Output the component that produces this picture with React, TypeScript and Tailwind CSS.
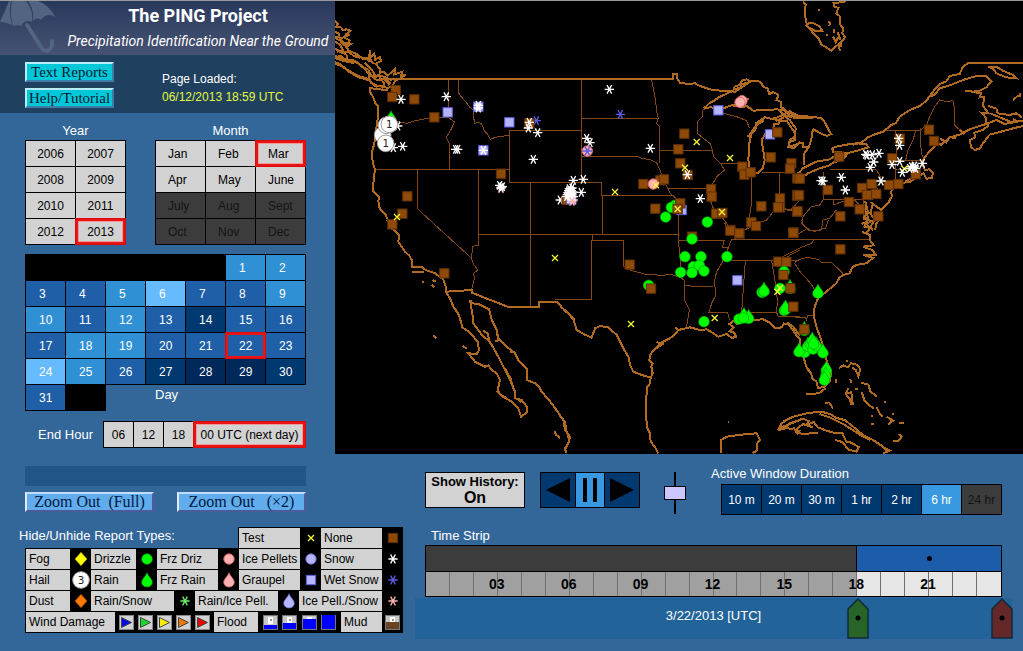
import { useState } from "react";
import clsx from "clsx";

type Kind =
  | "none"
  | "test"
  | "snow"
  | "wetsnow"
  | "rainsnow"
  | "icesnow"
  | "drizzle"
  | "rain"
  | "frzdriz"
  | "frzrain"
  | "pellets"
  | "graupel"
  | "rainice"
  | "fog"
  | "dust"
  | "hail"
  | "hail1"
  | "hail3";

type Marker = [Kind, number, number];

const STAR = "M-14 0H14M-7 -13L7 13M7 -13L-7 13";
const DROP = "M0 -22C3 -11 16 -4 16 7A16 14 0 0 1 -16 7C-16 -4 -3 -11 0 -22Z";

// Symbols are drawn on a grid of three units per screen pixel
function Symbol({ kind }: { kind: Kind }) {
  switch (kind) {
    case "none":
      return <rect x="-14" y="-14" width="28" height="28" fill="#8f4a08" stroke="#5c2f06" strokeWidth="3" />;
    case "test":
      return <path d="M-9 -9L9 9M9 -9L-9 9" stroke="#f4f43c" strokeWidth="4" />;
    case "snow":
      return <path d={STAR} stroke="#ffffff" strokeWidth="4" />;
    case "wetsnow":
      return <path d={STAR} stroke="#5a5ae6" strokeWidth="4" />;
    case "rainsnow":
      return <path d={STAR} stroke="#6cf06c" strokeWidth="4" />;
    case "icesnow":
      return <path d={STAR} stroke="#ffb4b4" strokeWidth="4" />;
    case "drizzle":
      return <circle r="16" fill="#00ff00" stroke="#0a9a0a" strokeWidth="2" />;
    case "rain":
      return <path d={DROP} fill="#00ff00" stroke="#0a9a0a" strokeWidth="2" />;
    case "frzdriz":
      return <circle r="15.5" fill="#ffb0b0" stroke="#d86868" strokeWidth="3" />;
    case "frzrain":
      return <path d={DROP} fill="#ffb0b0" stroke="#d86868" strokeWidth="2" />;
    case "pellets":
      return <circle r="15.5" fill="#b4b4ff" stroke="#6c6cd8" strokeWidth="3" />;
    case "rainice":
      return <path d={DROP} fill="#b4b4ff" stroke="#6c6cd8" strokeWidth="2" />;
    case "graupel":
      return <rect x="-14" y="-14" width="28" height="28" fill="#b4b4ff" stroke="#5c5ce0" strokeWidth="3" />;
    case "fog":
      return <path d="M0 -20L18 0L0 20L-18 0Z" fill="#ffff00" stroke="#a8a800" strokeWidth="2" />;
    case "dust":
      return <path d="M0 -20L18 0L0 20L-18 0Z" fill="#ff7800" stroke="#a04800" strokeWidth="2" />;
    default:
      return (
        <>
          <circle r="25" fill="#ffffff" stroke="#9a9a9a" strokeWidth="3" />
          {kind !== "hail" && (
            <text y="11" textAnchor="middle" fontSize="31" fill="#222222" className="font-['DejaVu_Sans',sans-serif]">
              {kind === "hail1" ? "1" : "3"}
            </text>
          )}
        </>
      );
  }
}

function Icon({ kind }: { kind: Kind }) {
  return (
    <svg viewBox="-30 -30 60 60" className="size-5 shrink-0" aria-hidden="true">
      <Symbol kind={kind} />
    </svg>
  );
}

interface Region {
  shift: string;
  coast: string;
  states: string;
  markers: Marker[];
}

const regions: Region[] = [
  {
    // Pacific Northwest
    shift: "translate(0 0)",
    coast:
      "M0 62l8 10-6 10 14-2 8 10 10-2 12 4-14 12-4 8 16 10-4 12-14 2-10-14-16-8M0 95l12 6 2 14 14 14 20 2-14 10 8 12 22 8 16 12 20 2 6-24-2 26 14-16 2 18 14-8 4 12-16 8 12 16 0 12 12-4 12 12 22-20-2 16 24-8-4 12 14-2-20 12-26 2-16-8-20-6-10 10-12-8-8-18-20-8-14-14-16-8-18 2-14-14-14 4M0 110l20 4 24-10M0 125l16 10 8 16-18 4M8 150l26 14 4 14M0 146l20 12 20-4 16 14 20 6M0 168l28 8 30 8 24 14 18 22 4 18-34-10-32-18-24-18-14-6M0 174l24 8 34 8M0 192l20 6 26 20 26 14 28 8 26 22M60 160l24 16 22 2 10 14M80 172l30 12M90 188l20 20 10 18M104 226l28 2 8 12-22-2M106 248l18 8 36 8 14-8 6-14 14-6M138 236l10 16-8 12M150 240l14 16M156 236l10 16M104 260V274L114 290L120 308L128 316L130 345L126 370L122 400L118 430L110 460L114 490L120 508L116 540L114 572L132 590L130 604L134 625L152 645L165 672L172 690M104 264L130 268L160 270M140 237H720",
    states:
      "M190 365L215 370L240 362L285 354L315 352H342M340 240V352L358 366L350 385L334 412L342 430V508M122 508H523M370 240V278L380 292L392 305L405 322L415 330L418 372L430 366L440 372L448 392L458 402L466 418L480 412L522 406M523 548V392H675M523 548H800M586 548V920M247 508V626L410 775M430 508V738M430 703H1030",
    markers: [
      ["none", 182, 270], ["none", 172, 291], ["none", 238, 298], ["none", 298, 352],
      ["none", 217, 589], ["none", 202, 641], ["none", 172, 673], ["test", 186, 651],
      ["none", 498, 521], ["snow", 198, 298], ["snow", 334, 290], ["graupel", 338, 337],
      ["graupel", 430, 320], ["snow", 430, 316], ["snow", 430, 324], ["graupel", 523, 367],
      ["graupel", 445, 451], ["snow", 445, 451], ["wetsnow", 604, 362], ["none", 583, 370],
      ["snow", 583, 367], ["snow", 580, 384], ["snow", 608, 398], ["snow", 595, 478],
      ["snow", 362, 448], ["snow", 368, 448], ["snow", 203, 439], ["snow", 175, 443],
      ["snow", 188, 378], ["rain", 168, 354], ["hail", 143, 405], ["hail", 154, 376],
      ["hail1", 163, 373], ["hail1", 152, 430], ["icesnow", 498, 566], ["snow", 494, 556],
      ["snow", 502, 560], ["snow", 498, 562],
    ],
  },
  {
    // Southwest and Baja California
    shift: "translate(0 660)",
    coast:
      "M155 0L178 30L192 45L190 65L210 95L222 106L230 120L232 140L262 142L272 150L300 160L325 178L332 200L332 215L345 235L355 260L362 270L372 285L382 322L405 338L428 365L432 390L425 402L400 400L420 425L450 440L460 436L470 450L485 460L495 480L487 515L508 532L530 545L550 565L558 590L575 578L575 560L560 540L540 535L540 515L530 490L510 450L490 410L470 375L460 360L445 350L430 330L415 310L412 280L405 240L412 250L430 252L462 268L470 300L485 330L490 355L515 380L540 400L550 420L575 445L575 480L600 490L612 500L620 515L650 550L685 600L690 630L705 650L700 670L690 685L695 700M335 215L410 210V218L518 260H612V245H665L690 272L720 300M445 332l14 10 4 22-12-10M485 340l6 20-10 4M505 440l14 24 10 26 8 20M512 450l14 24 8 26M548 535l10 12M488 512l14 18 12 2M232 157h34M260 187h8M292 180l10 5M290 195l8 8M295 345l8 10M382 378l15 8M525 396h16M658 632l5 12 12 10",
    states: "M410 210L418 175L416 160L428 150L414 130L410 118L412 80L420 76L430 78M660 238H720",
    markers: [["none", 328, 160], ["test", 660, 114]],
  },
  {
    // Northern plains and Great Lakes
    shift: "translate(675 0)",
    coast:
      "M0 237H340V222L350 222L352 236L360 248L385 252L405 250L420 258L450 268L480 272L510 272L525 276L545 262L575 242L600 245L612 262L622 264L628 282L640 276L655 285L650 300L664 306L662 322L690 340L720 348M432 325L450 308L462 302L480 290L520 272L524 260L540 254L546 242L560 238L570 244M520 268l20-4 6-12 14-4M432 325L450 322L490 325L520 314L545 322L560 318L580 332L620 330L650 328L675 332M560 410l12-6 14-14 2-14 12-12M572 400l22-28 18-10M566 410l10-16M600 362L585 380L575 395L568 430L565 480L570 510L578 523L595 518L608 505L614 480L608 440L605 420L622 392M585 372L615 352L640 358L665 346L690 350L720 348M654 328L670 344L690 334L720 352M640 385L642 372L655 372L658 362L680 362L695 385L705 400L705 420L690 425L685 440L700 445L720 425M640 350l10 12 22-10M520 320l22-10 12-12 12 0",
    states:
      "M0 392H62M64 240V548M64 355H295M64 469H235L245 476L270 478L290 488L300 510L306 530L320 560L330 580L345 592L355 606V703M275 240L280 265L286 295L290 335L295 355L290 370L298 380V490M298 451H458M125 548V586H340M127 586V703M320 566L390 564L438 564L448 555M440 325L428 330L428 350L412 365L412 400L430 415L450 430L458 451L460 470L480 488L494 510L470 530L462 545L448 560L450 580L452 605L462 630L485 650L500 670L508 690M480 490H545M490 340L530 350L560 362L568 385M575 530V610L570 640L560 690M605 517H705M658 519V600M500 694L530 690L560 688L590 670L620 660L640 635L660 625L690 632L720 600",
    markers: [
      ["none", 373, 401], ["none", 355, 448], ["none", 361, 490], ["none", 383, 525],
      ["none", 250, 552], ["none", 301, 541], ["none", 312, 538], ["none", 286, 626],
      ["none", 453, 567], ["none", 455, 590], ["none", 468, 641], ["none", 487, 639],
      ["none", 547, 500], ["none", 553, 524], ["none", 572, 517], ["none", 632, 472],
      ["graupel", 630, 403], ["none", 652, 397], ["none", 660, 595], ["none", 660, 622],
      ["none", 654, 622], ["none", 604, 619], ["none", 574, 667], ["none", 588, 678],
      ["none", 700, 698], ["none", 511, 690], ["none", 538, 700],
      ["none", 712, 535], ["none", 712, 585], ["none", 712, 635],
      ["graupel", 475, 331], ["frzdriz", 546, 302], ["frzdriz", 540, 307], ["snow", 148, 268],
      ["wetsnow", 181, 343], ["snow", 80, 415], ["snow", 90, 428], ["frzdriz", 82, 453],
      ["wetsnow", 82, 453], ["snow", 271, 445], ["snow", 40, 541], ["snow", 70, 538],
      ["snow", 64, 577], ["snow", 1, 600], ["snow", 382, 524], ["snow", 421, 596],
      ["none", 20, 600], ["graupel", 34, 598], ["icesnow", 40, 600], ["snow", 28, 566],
      ["snow", 34, 572], ["snow", 24, 578], ["snow", 36, 582], ["snow", 28, 588],
      ["snow", 20, 590], ["snow", 40, 590], ["snow", 30, 596], ["snow", 26, 572],
      ["snow", 31, 580], ["snow", 36, 564], ["snow", 22, 584], ["snow", 33, 592],
      ["snow", 38, 576], ["icesnow", 36, 604],
      ["test", 410, 426], ["test", 510, 474], ["test", 375, 503], ["test", 165, 576],
      ["frzdriz", 280, 552], ["test", 288, 556], ["graupel", 365, 630], ["drizzle", 345, 616],
      ["none", 361, 610], ["drizzle", 334, 622], ["none", 353, 627], ["test", 353, 627],
      ["drizzle", 317, 651], ["drizzle", 442, 666], ["test", 486, 636],
    ],
  },
  {
    // Northeast and eastern Canada
    shift: "translate(1344 0)",
    coast:
      "M60 4L68 14L66 30L68 60L74 80L84 90L90 100L106 114L116 134L130 142L145 152L155 142L168 132L170 152M175 142V126L186 112L178 100L180 84L170 72L172 50L160 40L166 24L154 20L152 10L190 4M68 78L78 70L92 70L108 78L118 92L95 92L80 84M154 88v12M150 110l8 16 8-14M164 96l8 24M104 30h6M134 64l8 6-4 8M128 104h6M0 322L10 338L20 348H60L100 352L118 356L130 375L138 392L145 402L132 408L112 400L92 388L88 396L85 420L78 440L64 460L62 495M30 354h60M0 345L20 360L38 385L35 410L20 420L16 440L32 436L50 430L60 428V442L78 440M42 525L60 505L100 485L140 478L165 462L190 466L180 478L150 488L140 496L110 505L75 520L60 530L42 518M148 445L160 440L190 434L220 430L250 432L256 442L230 450L200 458L150 457ZM210 434L235 428L255 412L270 405L300 395L325 375L338 370L350 350L380 330L410 318L428 304L440 290L455 284L470 265L500 256L540 240L580 228L610 228L625 245L610 262L590 272L570 275L545 272M428 304L455 268L470 252L490 244L500 228L530 222L540 200L556 188H600L660 190L720 190M615 200L640 200L660 212L690 225L700 235L670 232L640 220L632 208ZM560 274L595 280L590 292L604 290L600 318L616 340L596 338L608 352L610 372L590 378L560 388L530 404L500 412L474 434L462 430L455 440L435 460L422 475L418 495L426 510L440 508L450 520L446 534L430 536L422 520L400 532L382 545L350 550L330 556L325 574L326 590L315 610L295 630L275 616L262 606M616 318L640 326L644 340L680 345L700 340L716 352M622 340L650 352L684 366L702 364L690 358M690 300l14-12 8 0 0-8M610 372L640 360L664 372L720 362M720 378L690 385L650 396L620 404L600 430L590 446L575 450L563 440L562 420L576 412L574 398L600 390L618 375M470 415l20 12 10-16 20 4M530 390l14 14M365 545l16-8 24-10M246 602L256 640L244 650L262 665L250 672L270 690M250 605L246 630L258 660M270 610L262 640L276 660L262 680M276 640L292 650L280 672L276 690M240 655l30 10",
    states:
      "M310 390H412L430 378L440 350L455 320L470 300L490 305L510 302L515 330V375L525 385L540 395M338 392L342 430L338 480V540M398 392L390 420L375 450L368 480M412 385V430L418 470M338 480H415M335 508H395M122 515V598H270M140 508H278L290 525L295 545L280 560L290 585M150 600V615L180 604L215 600L240 625M122 598L110 615L85 620L60 650L56 670L80 690M160 630L140 655L120 660L115 690L90 692M0 625L20 630L45 640M240 598V650",
    markers: [
      ["none", 25, 490], ["none", 21, 506], ["none", 50, 536], ["none", 43, 587],
      ["none", 48, 586], ["none", 43, 634], ["none", 168, 470], ["none", 134, 570],
      ["none", 438, 389], ["none", 453, 423], ["none", 350, 416], ["none", 328, 475],
      ["none", 398, 523], ["none", 346, 552], ["none", 318, 555], ["none", 237, 564],
      ["none", 252, 585], ["none", 266, 552], ["none", 280, 582], ["none", 198, 606],
      ["none", 230, 628], ["none", 172, 649], ["none", 286, 649], ["snow", 347, 415],
      ["snow", 350, 436], ["snow", 248, 463], ["snow", 252, 466], ["snow", 268, 464],
      ["snow", 288, 460], ["snow", 272, 486], ["snow", 262, 502], ["snow", 350, 484],
      ["snow", 327, 494], ["snow", 418, 490], ["snow", 380, 505], ["snow", 386, 500],
      ["snow", 392, 503], ["snow", 398, 505], ["snow", 394, 498], ["test", 364, 506],
      ["snow", 358, 517], ["snow", 114, 542], ["snow", 120, 543], ["snow", 175, 532],
      ["snow", 187, 570], ["snow", 294, 543],
    ],
  },
  {
    // Texas, the Gulf and the Deep South
    shift: "translate(675 660)",
    coast:
      "M0 258L20 275L40 298L50 330L75 344L95 353L105 325L120 318L145 322L170 345L190 385L205 410L212 440L220 455L245 465L272 473L278 460L274 440L278 430L268 420L270 405L280 392L300 370L330 355L348 340L355 330L390 322L420 330L440 328L460 340L475 350L500 342L516 354L528 350L522 338L508 334L520 322L508 312L522 302L530 312L536 300L570 300L610 298L630 308L645 325L665 322L672 312L685 310L700 320L720 347M272 473L270 490L262 500L258 540L260 620L270 640L272 665L285 682L295 700M290 366l18 6-20 14M345 322l14 10M483 700V660L500 650L560 642L590 640L600 660L590 672L592 690L578 700M655 630L665 610L680 600L700 590L720 585M655 630L680 624L700 628M664 622L690 612L720 600M700 622L712 640L720 630M0 588L15 605L20 635L28 660L15 690L20 700M504 606h4",
    states:
      "M97 43V61M95 61H190V138L215 152L240 158L260 165L280 162L300 168L330 162L355 170L373 180V240L388 270L380 320M95 61V238H0M355 43V61L360 110V175M355 61H493L487 82H505L515 58H720M375 197L430 200L460 199M505 82L497 110L485 130L470 155L463 185L467 215L465 230L455 250L447 276H503L508 300M485 122H718M556 122L545 275L552 295M635 122L648 200L652 240L650 278M560 278H650L655 290H720M493 8L510 30L538 50L515 60M670 122L690 105L720 90",
    markers: [
      ["none", 511, 32], ["none", 538, 40], ["none", 700, 38], ["none", 396, 50],
      ["drizzle", 396, 57], ["none", 209, 134], ["drizzle", 266, 196], ["none", 273, 206],
      ["drizzle", 375, 110], ["drizzle", 423, 110], ["drizzle", 400, 140], ["drizzle", 418, 136],
      ["drizzle", 362, 157], ["drizzle", 432, 153], ["drizzle", 396, 158], ["drizzle", 501, 110],
      ["graupel", 532, 181], ["drizzle", 432, 305], ["test", 213, 312], ["test", 464, 294],
      ["drizzle", 606, 217], ["drizzle", 611, 214], ["rain", 612, 208], ["rain", 552, 284],
      ["drizzle", 537, 297], ["rain", 566, 290], ["drizzle", 550, 294], ["none", 655, 125],
      ["none", 679, 126], ["drizzle", 672, 155], ["none", 670, 165], ["rain", 690, 200],
      ["none", 691, 205], ["drizzle", 660, 205], ["test", 660, 204], ["test", 652, 215],
      ["rain", 673, 266], ["rain", 677, 262], ["none", 700, 260],
    ],
  },
  {
    // Carolinas, Florida, Cuba and the Bahamas
    shift: "translate(1344 660)",
    coast:
      "M235 12L250 6L244 20L262 24L250 40L238 36L262 46V62L272 76L240 80L268 90L278 105L240 104L270 114L250 130L220 135L208 142L200 160L180 165L170 172L160 190L130 215L105 235L95 260L92 285L100 320L115 360L125 400L132 425L145 455L140 485L125 500L105 505L100 485L88 475L84 460L70 440L64 420L52 385L50 355L40 345L30 330L15 312L0 310M70 440l8 14M70 523h20L110 518L128 505M0 605L30 590L80 578L120 576L145 584L160 594L185 600L208 618L240 645L270 660L300 680L315 695M110 582L140 592L180 612L206 628L236 648L262 660M0 630L20 610L60 596L78 604L68 616L92 606L104 622L130 632L160 640L178 640L190 665L205 668L228 682L220 695L195 688L178 666L155 660M36 635L60 642L106 638M46 640L40 628L60 612L90 622M300 682L320 692L300 700M168 444L182 436L194 442L204 430L222 434L232 448L226 468L218 450L206 442M190 424h6M158 478v10M202 478l2 12M216 506h8M196 504L188 522L200 536L206 556M204 512L210 556M186 518h16M234 488L256 494L262 514L282 530M236 516L244 540L262 558L272 566M280 560L290 580L298 590M306 544v6M268 584v6M264 612h8M312 590L328 602L316 614M322 596L334 604M348 610h14M328 582h4M330 662L346 664L356 650L346 642M138 546L150 566M126 550h8",
    states:
      "M0 58H265M35 128L50 118L75 112L105 118L115 127H145L180 160M35 130L55 160L70 175L90 200L100 225M0 290L68 292L70 300L75 285L92 285M0 110L30 95L60 80L85 70L92 60M56 0L60 15L76 30L95 34L128 24L136 0M70 28L30 50",
    markers: [
      ["none", 31, 38], ["none", 172, 88], ["rain", 105, 214], ["rain", 64, 326],
      ["none", 64, 328], ["rain", 65, 392], ["rain", 48, 390], ["rain", 74, 374],
      ["rain", 82, 366], ["rain", 90, 382], ["rain", 100, 372], ["rain", 88, 358],
      ["rain", 92, 366], ["rain", 120, 393], ["rain", 130, 445], ["rain", 128, 462],
      ["rain", 124, 475],
    ],
  },
];

function ReportMap() {
  return (
    <svg
      viewBox="0 3 2064 1359"
      preserveAspectRatio="xMinYMin slice"
      className="block h-[453px] w-full bg-black"
      role="img"
      aria-label="Map of precipitation reports"
    >
      <g fill="none" shapeRendering="crispEdges">
        {regions.map((r) => (
          <path key={r.shift} transform={r.shift} d={r.states} stroke="#824716" strokeWidth="3" />
        ))}
        {regions.map((r) => (
          <path key={r.shift} transform={r.shift} d={r.coast} stroke="#b06a22" strokeWidth="6" />
        ))}
      </g>
      {regions.map((r) => (
        <g key={r.shift} transform={r.shift}>
          {r.markers.map(([kind, x, y], i) => (
            <g key={i} transform={`translate(${x} ${y})`}>
              <Symbol kind={kind} />
            </g>
          ))}
        </g>
      ))}
    </svg>
  );
}

const years = ["2006", "2007", "2008", "2009", "2010", "2011", "2012", "2013"];
const months = ["Jan", "Feb", "Mar", "Apr", "May", "June", "July", "Aug", "Sept", "Oct", "Nov", "Dec"];

// Busier days get a lighter blue
const shades = ["bg-[#002859]", "bg-[#003870]", "bg-[#1e5fa8]", "bg-[#3090d4]", "bg-[#66bbff]"];
const dayLevels = [3, 3, 2, 2, 3, 4, 2, 2, 3, 3, 2, 3, 2, 1, 2, 2, 2, 3, 3, 2, 2, 2, 2, 4, 3, 2, 1, 0, 0, 1, 2];

const picked = "relative outline-1 outline-[#d80c0c] border-2 border-[#e81414]";
const pickedLight = `${picked} shadow-[inset_0_0_0_1px_#f09a9a]`;

function DayButton({ day, selected, onPick }: { day: number; selected: boolean; onPick: (d: number) => void }) {
  return (
    <button
      onClick={() => onPick(day)}
      className={clsx("h-[25px] text-left text-white", shades[dayLevels[day - 1]], selected ? `${picked} pl-[11px]` : "pl-[13px]")}
    >
      {day}
    </button>
  );
}

function Sidebar() {
  const [year, setYear] = useState("2013");
  const [month, setMonth] = useState("Mar");
  const [day, setDay] = useState(22);
  const [hour, setHour] = useState("00 UTC (next day)");

  return (
    <aside className="w-[335px] shrink-0">
      <header className="relative h-[54px] overflow-hidden bg-linear-to-b from-[#29395c] to-[#465273] text-center text-white">
        <svg viewBox="0 0 60 54" className="absolute top-0 left-0 h-[54px] w-[60px]" aria-hidden="true">
          <g fill="#526482">
            <path d="M0 21C4 12 7 5 9 0H11C9 9 10 15 12 24C8 22 4 21 0 21Z" />
            <path d="M12 0H26C31 6 33 13 32 21C28 19 24 20 21 25C19 24 16 24 13 25C11 17 10 9 12 0Z" />
            <path d="M28 0H38C46 3 52 9 55 16C50 13 45 13 41 19C38 17 36 17 33 20C34 12 32 6 28 0Z" />
          </g>
          <path d="M27 24L41 46C45 53 53 50 52 40" fill="none" stroke="#526482" strokeWidth="4" strokeLinecap="round" />
        </svg>
        <div className="relative pl-[61px] font-[Roboto,'Liberation_Sans',sans-serif]">
          <h1 className="pt-px text-[18px] leading-[27px] font-bold">The PING Project</h1>
          <p className="text-[14px] leading-6 whitespace-nowrap italic">Precipitation Identification Near the Ground</p>
        </div>
      </header>

      <div className="flex h-[58px] gap-12 bg-[#204060] pt-[7px] pl-[25px]">
        <div className="flex flex-col gap-[6px] font-['Liberation_Serif',serif] text-[15px] leading-4 text-[#001830]">
          <button className="h-5 w-[89px] border-2 border-t-[#b8ecf8] border-r-[#3c7ca8] border-b-[#3c7ca8] border-l-[#b8ecf8] bg-[#00c8d8]">
            Text Reports
          </button>
          <button className="h-5 w-[89px] border-2 border-t-[#b8ecf8] border-r-[#3c7ca8] border-b-[#3c7ca8] border-l-[#b8ecf8] bg-[#00c8d8]">
            Help/Tutorial
          </button>
        </div>
        <p className="pt-2 text-[12px] leading-[18px] text-white">
          <span className="block">Page Loaded:</span>
          <span className="block text-[#e4f83c]">06/12/2013 18:59 UTC</span>
        </p>
      </div>

      <div className="flex flex-col pt-2 pr-[29px] pl-[25px]">
        <div className="flex justify-between text-center">
          <section className="w-[101px]">
            <h2 className="h-[19px] text-[13px] leading-[19px] text-white">Year</h2>
            <div className="grid grid-cols-2 gap-px bg-black p-px">
              {years.map((y) => (
                <button
                  key={y}
                  onClick={() => setYear(y)}
                  className={clsx("h-[25px] bg-[#d2d2d2]", y === year && pickedLight)}
                >
                  {y}
                </button>
              ))}
            </div>
          </section>
          <section className="w-[151px]">
            <h2 className="h-[19px] text-[13px] leading-[19px] text-white">Month</h2>
            <div className="grid grid-cols-3 gap-px bg-black p-px">
              {months.map((m, i) => (
                <button
                  key={m}
                  onClick={() => setMonth(m)}
                  disabled={i > 5}
                  className={clsx(
                    "h-[25px] text-left",
                    i > 5 ? "bg-[#3c3c3c] text-[#141414]" : "bg-[#d2d2d2]",
                    m === month ? `${pickedLight} pl-[10px]` : "pl-3"
                  )}
                >
                  {m}
                </button>
              ))}
            </div>
          </section>
        </div>

        <div className="mt-[9px] grid grid-cols-7 gap-px bg-black p-px">
          <div className="col-span-5" />
          {dayLevels.slice(0, 30).map((_, i) => (
            <DayButton key={i} day={i + 1} selected={day === i + 1} onPick={setDay} />
          ))}
        </div>
        <div className="flex">
          <div className="grid w-[81px] grid-cols-2 gap-px bg-black px-px pb-px">
            <DayButton day={31} selected={day === 31} onPick={setDay} />
          </div>
          <h2 className="pl-[49px] text-[13px] leading-5 text-white">Day</h2>
        </div>

        <div className="mt-[10px] flex items-center justify-end gap-[10px]">
          <span className="text-[13px] text-white">End Hour</span>
          <div className="flex gap-px bg-black p-px">
            {["06", "12", "18", "00 UTC (next day)"].map((h) => (
              <button
                key={h}
                onClick={() => setHour(h)}
                className={clsx(
                  "h-[25px] bg-[#d2d2d2] whitespace-nowrap",
                  h.length > 2 ? "w-[111px]" : "w-[29px]",
                  h === hour && pickedLight
                )}
              >
                {h}
              </button>
            ))}
          </div>
        </div>

        <div className="mt-[18px] h-5 bg-[#225588]" />

        <div className="mt-[6px] flex justify-between font-['Liberation_Serif',serif] text-[16px] leading-4 whitespace-pre text-[#001840]">
          <button className="h-5 w-[129px] border-2 border-t-[#c4dcfc] border-r-[#4c5c98] border-b-[#4c5c98] border-l-[#e4ecfc] bg-[#60acec]">
            {"Zoom Out  (Full)"}
          </button>
          <button className="h-5 w-[129px] border-2 border-t-[#c4dcfc] border-r-[#4c5c98] border-b-[#4c5c98] border-l-[#e4ecfc] bg-[#60acec]">
            {"Zoom Out   (×2)"}
          </button>
        </div>
      </div>
    </aside>
  );
}

function Controls() {
  const [showHistory, setShowHistory] = useState(true);
  const [span, setSpan] = useState("6 hr");

  return (
    <div className="flex items-start pt-[18px] pr-[21px] pl-[90px]">
      <button
        onClick={() => setShowHistory(!showHistory)}
        className="h-9 w-[100px] border border-black bg-[#d2d2d2] text-[13px] leading-4 font-bold"
      >
        Show History:
        <span className="block text-[16px] leading-4">{showHistory ? "On" : "Off"}</span>
      </button>

      <div className="ml-[15px] flex h-9 w-[100px] gap-px bg-black p-px">
        <button aria-label="Step back" className="flex flex-1 items-center justify-center bg-[#003870]">
          <svg viewBox="0 0 24 24" className="size-6">
            <path d="M0 12L24 0V24Z" />
          </svg>
        </button>
        <button aria-label="Pause" className="flex w-7 items-center justify-center bg-[#3898e0]">
          <svg viewBox="0 0 14 24" className="h-6 w-[14px]">
            <path d="M0 0H4V24H0ZM10 0H14V24H10Z" />
          </svg>
        </button>
        <button aria-label="Step forward" className="flex flex-1 items-center justify-center bg-[#003870]">
          <svg viewBox="0 0 24 24" className="size-6">
            <path d="M24 12L0 0V24Z" />
          </svg>
        </button>
      </div>

      <input
        type="range"
        aria-label="Playback speed"
        defaultValue={50}
        className="ml-6 h-[42px] w-[22px] appearance-none bg-[linear-gradient(black,black)] bg-[length:2px_100%] bg-center bg-no-repeat [writing-mode:vertical-lr] [&::-webkit-slider-thumb]:h-[14px] [&::-webkit-slider-thumb]:w-[22px] [&::-webkit-slider-thumb]:appearance-none [&::-webkit-slider-thumb]:border [&::-webkit-slider-thumb]:border-black [&::-webkit-slider-thumb]:bg-[#ccc8ff]"
      />

      <section className="-mt-2 ml-[25px] flex-1">
        <h2 className="text-[13px] leading-5 text-white">Active Window Duration</h2>
        <div className="ml-[10px] grid grid-cols-7 gap-px bg-black p-px">
          {["10 m", "20 m", "30 m", "1 hr", "2 hr", "6 hr", "24 hr"].map((s) => (
            <button
              key={s}
              onClick={() => setSpan(s)}
              disabled={s === "24 hr"}
              className={clsx(
                "h-[29px]",
                s === "24 hr" ? "bg-[#3c3c3c] text-[#141414]" : s === span ? "bg-[#3898e0] text-white" : "bg-[#003870] text-white"
              )}
            >
              {s}
            </button>
          ))}
        </div>
      </section>
    </div>
  );
}

function WindIcon({ color }: { color: string }) {
  return (
    <svg viewBox="0 0 15 15" className="size-[15px]" aria-hidden="true">
      <rect x="0.5" y="0.5" width="14" height="14" fill="#d2d2d2" stroke="#888888" />
      <path d="M2.5 2.5L12.5 7.5L2.5 12.5Z" fill={color} stroke="#444444" strokeWidth="1" />
    </svg>
  );
}

function LevelIcon({ level, color }: { level: number; color: string }) {
  return (
    <svg viewBox="0 0 15 15" className="size-[15px]" aria-hidden="true">
      <rect x="0.5" y="0.5" width="14" height="14" fill="#c8c8c8" stroke="#777777" />
      <path d="M5 2H10V9H5Z" fill="#ffffff" />
      <path d="M7 4H9V6H7Z" fill="#999999" />
      <rect x="1" y={14 - level} width="13" height={level} fill={color} />
    </svg>
  );
}

interface LegendItem {
  label: string;
  width: string;
  iconWidth: string;
  icon: React.ReactNode;
}

const item = (label: string, width: string, kind: Kind): LegendItem => ({
  label,
  width,
  iconWidth: "w-[21px]",
  icon: <Icon kind={kind} />,
});

const legend: LegendItem[][] = [
  [item("Test", "w-[61px]", "test"), item("None", "w-[61px]", "none")],
  [
    item("Fog", "w-11", "fog"),
    item("Drizzle", "w-[45px]", "drizzle"),
    item("Frz Driz", "w-[61px]", "frzdriz"),
    item("Ice Pellets", "w-[61px]", "pellets"),
    item("Snow", "w-[61px]", "snow"),
  ],
  [
    item("Hail", "w-11", "hail3"),
    item("Rain", "w-[45px]", "rain"),
    item("Frz Rain", "w-[61px]", "frzrain"),
    item("Graupel", "w-[61px]", "graupel"),
    item("Wet Snow", "w-[61px]", "wetsnow"),
  ],
  [
    item("Dust", "w-11", "dust"),
    item("Rain/Snow", "w-[83px]", "rainsnow"),
    item("Rain/Ice Pell.", "w-[83px]", "rainice"),
    item("Ice Pell./Snow", "w-[83px]", "icesnow"),
  ],
  [
    {
      label: "Wind Damage",
      width: "w-[89px]",
      iconWidth: "w-[99px]",
      icon: ["#0808e0", "#18d830", "#f8f000", "#f07800", "#e80000"].map((c) => <WindIcon key={c} color={c} />),
    },
    {
      label: "Flood",
      width: "w-11",
      iconWidth: "w-[83px]",
      icon: [4, 6, 10, 14].map((n) => <LevelIcon key={n} level={n} color="#0000ff" />),
    },
    { label: "Mud", width: "w-[41px]", iconWidth: "w-[21px]", icon: <LevelIcon level={7} color="#6a4422" /> },
  ],
];

function Legend() {
  return (
    <section className="relative w-[403px] shrink-0 pt-[7px]">
      <h2 className="absolute top-[7px] left-[19px] text-[13px] leading-[18px] text-white">Hide/Unhide Report Types:</h2>
      <div className="flex flex-col items-end">
        {legend.map((row, i) => (
          <div key={i} className="flex bg-black pl-px">
            {row.map((it) => (
              <button key={it.label} className="flex h-[21px] items-end">
                <span className={clsx("h-5 bg-[#d2d2d2] pl-[3px] text-left leading-5 whitespace-nowrap", it.width)}>
                  {it.label}
                </span>
                <span className={clsx("flex h-5 items-center justify-evenly", it.iconWidth)}>{it.icon}</span>
              </button>
            ))}
          </div>
        ))}
        <div className="h-px w-[378px] bg-black" />
      </div>
    </section>
  );
}

function TimeHandle({ fill, label, place }: { fill: string; label: string; place: string }) {
  return (
    <button aria-label={label} className={clsx("absolute top-0 -translate-x-1/2", place)}>
      <svg viewBox="0 0 22 41" className="block h-[41px] w-[22px]">
        <path d="M11 1L21 11V40H1V11Z" fill={fill} stroke="#10283c" strokeWidth="1.5" />
        <circle cx="11" cy="20" r="2.5" />
      </svg>
    </button>
  );
}

function TimeStrip() {
  return (
    <section className="flex-1 pt-[7px] pr-[21px] pl-[22px]">
      <h2 className="pl-[6px] text-[13px] leading-[18px] text-white">Time Strip</h2>
      <div className="border border-black">
        <div className="flex h-[25px]">
          <div className="w-3/4 border-r border-black bg-[#3c3c3c]" />
          <div className="flex flex-1 items-center justify-center bg-[#1c5ca8]">
            <span className="size-[5px] rounded-full bg-black" />
          </div>
        </div>
        <div className="grid h-[25px] grid-cols-24 border-t border-black">
          {Array.from({ length: 24 }, (_, i) => i + 1).map((h) => (
            <div
              key={h}
              className={clsx(
                "relative",
                h > 18 ? "bg-[#e6e6e6]" : "bg-[#a0a0a0]",
                h < 24 && "border-r border-[#707070]"
              )}
            >
              {h % 3 === 0 && h < 24 && (
                <span className="absolute top-0 right-0 z-10 translate-x-1/2 text-[14px] leading-6 font-bold">
                  {String(h).padStart(2, "0")}
                </span>
              )}
            </div>
          ))}
        </div>
      </div>
      <div className="-mx-[10px] mt-px h-[41px] bg-[#22649a] px-[10px]">
        <div className="relative">
          <p className="pt-2 text-center text-[13px] leading-5 text-white">3/22/2013 [UTC]</p>
          <TimeHandle fill="#286428" label="Window start" place="left-3/4" />
          <TimeHandle fill="#642828" label="Window end" place="left-full" />
        </div>
      </div>
    </section>
  );
}

export default function App() {
  return (
    <div className="min-h-screen border-t border-[#999999] bg-[#336699] font-['Liberation_Sans',Arial,sans-serif] text-[12px] text-black">
      <div className="flex">
        <Sidebar />
        <main className="min-w-0 flex-1">
          <ReportMap />
          <Controls />
        </main>
      </div>
      <div className="flex pt-[5px]">
        <Legend />
        <TimeStrip />
      </div>
    </div>
  );
}
